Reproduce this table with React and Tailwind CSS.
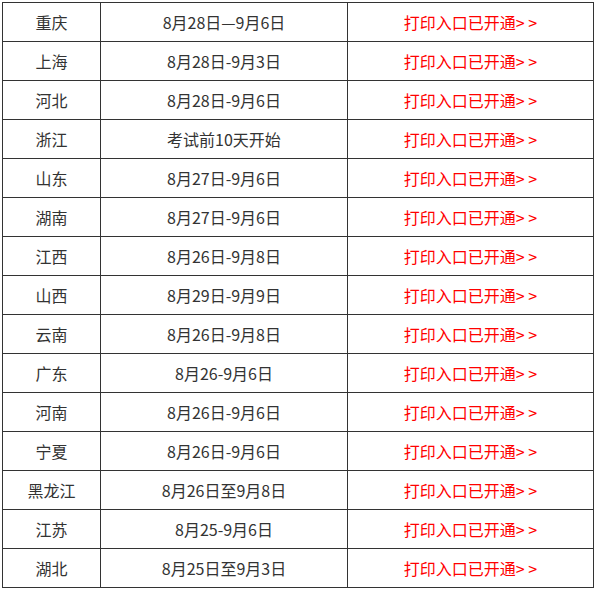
import React from "react";

const rows = [
  ["重庆", "8月28日—9月6日"],
  ["上海", "8月28日-9月3日"],
  ["河北", "8月28日-9月6日"],
  ["浙江", "考试前10天开始"],
  ["山东", "8月27日-9月6日"],
  ["湖南", "8月27日-9月6日"],
  ["江西", "8月26日-9月8日"],
  ["山西", "8月29日-9月9日"],
  ["云南", "8月26日-9月8日"],
  ["广东", "8月26-9月6日"],
  ["河南", "8月26日-9月6日"],
  ["宁夏", "8月26日-9月6日"],
  ["黑龙江", "8月26日至9月8日"],
  ["江苏", "8月25-9月6日"],
  ["湖北", "8月25日至9月3日"],
];

const cell =
  "flex h-[39px] items-center justify-center border-r border-b border-[#333]";

const App = () => {
  return (
    <div
      className="min-h-screen bg-white pt-[2px] pl-[2px] text-[16px] text-[#333]"
      style={{ fontFamily: '"Noto Sans CJK SC", "Noto Sans", sans-serif' }}
    >
      <div className="w-[592px] border-t border-l border-[#333]">
        {rows.map(([province, date]) => (
          <div key={province} className="flex">
            <div className={`${cell} w-[98px]`}>{province}</div>
            <div className={`${cell} w-[247px]`}>{date}</div>
            <div className={`${cell} w-[246px] text-[#ff0000]`}>
              <a href="#" className="whitespace-pre">
                打印入口已开通&gt; &gt;
              </a>
            </div>
          </div>
        ))}
      </div>
    </div>
  );
};

export default App;
